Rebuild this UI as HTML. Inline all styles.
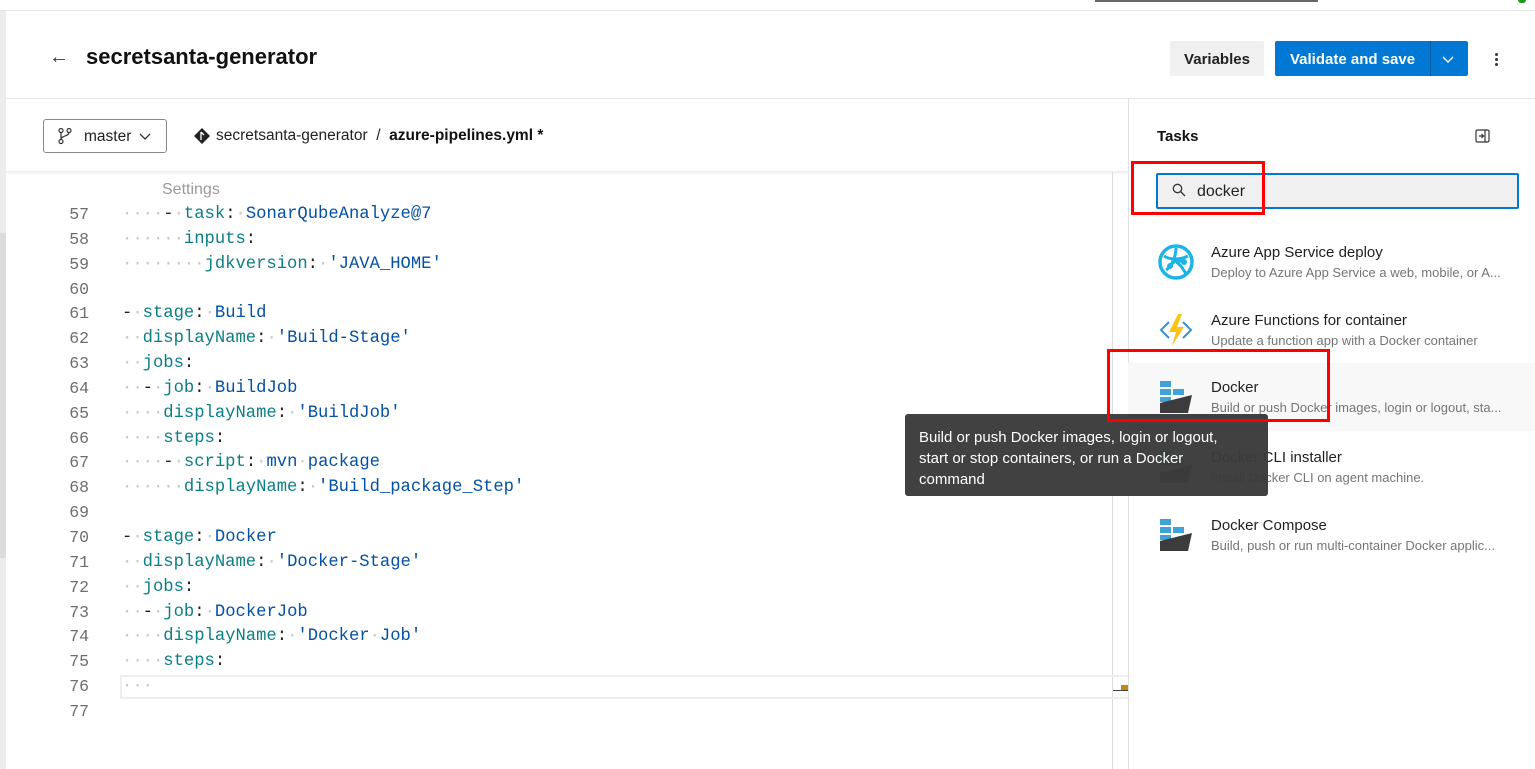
<!DOCTYPE html>
<html><head><meta charset="utf-8"><style>
*{box-sizing:border-box;margin:0;padding:0}
body{width:1535px;height:769px;overflow:hidden;background:#fff;font-family:"Segoe UI","Liberation Sans",sans-serif;position:relative;color:#201f1e}
.abs{position:absolute}
.code{position:absolute;left:0;font-family:"Liberation Mono",monospace;font-size:17.2px;white-space:pre;line-height:24.85px}
.ln{position:absolute;width:89px;text-align:right;color:#6e6e6e;font-family:"Liberation Mono",monospace;font-size:16.5px;line-height:24.85px}
.k{color:#0b7f86}.v{color:#0451a5}.d{color:#c8c8c8}
.item{position:absolute;left:1128px;width:407px;height:68px}
.item .t{position:absolute;left:83px;top:12px;font-size:15px;color:#201f1e}
.item .s{position:absolute;left:83px;top:33px;font-size:13px;color:#757575;white-space:nowrap}
.item svg{position:absolute;left:30px;top:12px}
</style></head><body>
<div class="abs" style="left:1095px;top:0;width:223px;height:2px;background:#666"></div>
<div class="abs" style="left:1518px;top:0;width:8px;height:3px;background:#1a9c1a;border-radius:0 0 3px 3px"></div>
<div class="abs" style="left:0;top:10px;width:1535px;height:1px;background:#e6e6e6"></div>
<div class="abs" style="left:0;top:11px;width:6px;height:222px;background:#ececec"></div>
<div class="abs" style="left:0;top:233px;width:6px;height:325px;background:#dcdcdc"></div>
<div class="abs" style="left:0;top:558px;width:6px;height:211px;background:#ececec"></div>

<!-- header -->
<div class="abs" style="left:49px;top:46px;font-size:20px;color:#333">&#8592;</div>
<div class="abs" style="left:86px;top:44px;font-size:22px;font-weight:bold;color:#111">secretsanta-generator</div>
<div class="abs" style="left:1170px;top:41px;width:94px;height:35px;background:#f0f0f0;border-radius:2px;font-size:15px;font-weight:600;text-align:center;line-height:37px;color:#222">Variables</div>
<div class="abs" style="left:1275px;top:41px;width:193px;height:35px;background:#0078d4;border-radius:2px;color:#fff;font-size:15px;font-weight:600;line-height:37px">
<span style="position:absolute;left:15px">Validate and save</span>
<div style="position:absolute;left:155px;top:0;width:1px;height:35px;background:#005a9e"></div>
<svg style="position:absolute;left:166px;top:13px" width="14" height="10" viewBox="0 0 14 10"><path d="M2 3l5 5 5-5" fill="none" stroke="#fff" stroke-width="1.5"/></svg>
</div>
<div class="abs" style="left:1495px;top:53px;width:3px;height:3px;background:#333;border-radius:50%;box-shadow:0 5px 0 #333,0 10px 0 #333"></div>
<div class="abs" style="left:6px;top:98px;width:1529px;height:1px;background:#e6e6e6"></div>

<!-- branch row -->
<div class="abs" style="left:43px;top:119px;width:124px;height:34px;border:1px solid #8a8a8a;border-radius:3px"></div>
<svg class="abs" style="left:57px;top:127px" width="16" height="18" viewBox="0 0 16 18"><circle cx="4" cy="3.5" r="2" fill="none" stroke="#333" stroke-width="1.2"/><circle cx="4" cy="14.5" r="2" fill="none" stroke="#333" stroke-width="1.2"/><circle cx="12" cy="3.5" r="2" fill="none" stroke="#333" stroke-width="1.2"/><path d="M4 5.5v7M12 5.5c0 4-8 3-8 7" fill="none" stroke="#333" stroke-width="1.2"/></svg>
<div class="abs" style="left:84px;top:128px;font-size:15.5px;color:#222">master</div>
<svg class="abs" style="left:138px;top:131px" width="14" height="10" viewBox="0 0 14 10"><path d="M2 3l5 5 5-5" fill="none" stroke="#333" stroke-width="1.3"/></svg>
<svg class="abs" style="left:193px;top:127px" width="18" height="18" viewBox="0 0 18 18"><path d="M9 1l8 8-8 8-8-8z" fill="#222"/><path d="M8 5v8M8 5l3 3" stroke="#fff" stroke-width="1.3" fill="none"/></svg>
<div class="abs" style="left:216px;top:127px;font-size:15.5px;color:#222">secretsanta-generator&nbsp;&nbsp;/&nbsp;&nbsp;<b style="font-weight:600;color:#111">azure-pipelines.yml *</b></div>
<div class="abs" style="left:6px;top:171px;width:1122px;height:4px;background:linear-gradient(#ececec,#fff)"></div>

<!-- editor -->
<div class="abs" style="left:1112px;top:172px;width:1px;height:597px;background:#dcdcdc"></div>
<div class="abs" style="left:120px;top:675px;width:1008px;height:24px;border:2px solid #eeeeee;border-right:none"></div>
<div class="abs" style="left:1121px;top:685px;width:7px;height:6px;background:#c4860c"></div>
<div class="abs" style="left:1113px;top:690px;width:15px;height:1px;background:#444"></div>
<div class="abs" style="left:162px;top:181px;font-size:16px;color:#9a9a9a">Settings</div>

<div class="ln" style="top:203px">57<br>58<br>59<br>60<br>61<br>62<br>63<br>64<br>65<br>66<br>67<br>68<br>69<br>70<br>71<br>72<br>73<br>74<br>75<br>76<br>77</div>
<div class="code" style="left:122px;top:203px"><span class="d">····</span>-<span class="d">·</span><span class="k">task</span>:<span class="d">·</span><span class="v">SonarQubeAnalyze@7</span>
<span class="d">······</span><span class="k">inputs</span>:
<span class="d">········</span><span class="k">jdkversion</span>:<span class="d">·</span><span class="v">'JAVA_HOME'</span>

-<span class="d">·</span><span class="k">stage</span>:<span class="d">·</span><span class="v">Build</span>
<span class="d">··</span><span class="k">displayName</span>:<span class="d">·</span><span class="v">'Build-Stage'</span>
<span class="d">··</span><span class="k">jobs</span>:
<span class="d">··</span>-<span class="d">·</span><span class="k">job</span>:<span class="d">·</span><span class="v">BuildJob</span>
<span class="d">····</span><span class="k">displayName</span>:<span class="d">·</span><span class="v">'BuildJob'</span>
<span class="d">····</span><span class="k">steps</span>:
<span class="d">····</span>-<span class="d">·</span><span class="k">script</span>:<span class="d">·</span><span class="v">mvn<span class="d">·</span>package</span>
<span class="d">······</span><span class="k">displayName</span>:<span class="d">·</span><span class="v">'Build_package_Step'</span>

-<span class="d">·</span><span class="k">stage</span>:<span class="d">·</span><span class="v">Docker</span>
<span class="d">··</span><span class="k">displayName</span>:<span class="d">·</span><span class="v">'Docker-Stage'</span>
<span class="d">··</span><span class="k">jobs</span>:
<span class="d">··</span>-<span class="d">·</span><span class="k">job</span>:<span class="d">·</span><span class="v">DockerJob</span>
<span class="d">····</span><span class="k">displayName</span>:<span class="d">·</span><span class="v">'Docker<span class="d">·</span>Job'</span>
<span class="d">····</span><span class="k">steps</span>:
<span class="d">···</span>
</div>

<!-- right panel -->
<div class="abs" style="left:1128px;top:99px;width:1px;height:670px;background:#e0e0e0"></div>
<div class="abs" style="left:1157px;top:128px;font-size:15px;font-weight:600;color:#111">Tasks</div>
<svg class="abs" style="left:1475px;top:129px" width="15" height="14" viewBox="0 0 15 14"><rect x="1" y="1" width="13" height="12" rx="1.5" fill="none" stroke="#333" stroke-width="1.2"/><path d="M10 1v12" stroke="#333" stroke-width="1.2"/><path d="M4 7h4M6.5 5l2 2-2 2" stroke="#333" stroke-width="1.2" fill="none"/></svg>
<div class="abs" style="left:1156px;top:173px;width:363px;height:36px;background:#f0f0f0;border:2px solid #0078d4;border-radius:2px"></div>
<svg class="abs" style="left:1172px;top:183px" width="14" height="14" viewBox="0 0 14 14"><circle cx="5.5" cy="5.5" r="4.2" fill="none" stroke="#333" stroke-width="1.3"/><path d="M8.5 8.5l4.5 4.5" stroke="#333" stroke-width="1.3"/></svg>
<div class="abs" style="left:1197px;top:183px;font-size:16px;color:#222">docker</div>

<div class="item" style="top:232px"><svg width="36" height="36" viewBox="0 0 36 36"><circle cx="18" cy="18" r="16" fill="none" stroke="#1ab4e8" stroke-width="3.5"/><path d="M6 12c6 4 16 4 24 0M8 26c6-4 10-14 10-22M18 18c4 2 8 8 10 12M12 22l6-6 8 2" fill="none" stroke="#1ab4e8" stroke-width="3"/><circle cx="12" cy="22" r="3" fill="#1ab4e8"/><circle cx="26" cy="18" r="3" fill="#1ab4e8"/></svg><div class="t">Azure App Service deploy</div><div class="s">Deploy to Azure App Service a web, mobile, or A...</div></div>
<div class="item" style="top:300px"><svg width="36" height="36" viewBox="0 0 36 36"><path d="M11 10l-8 8 8 8M25 10l8 8-8 8" fill="none" stroke="#3a8fd0" stroke-width="2"/><path d="M20 2l-9 18h7l-4 14 12-19h-7l5-13z" fill="#fcc419"/></svg><div class="t">Azure Functions for container</div><div class="s">Update a function app with a Docker container</div></div>
<div class="item" style="top:363px;background:#f8f8f8"><svg width="36" height="36" viewBox="0 0 36 36" style="top:16px"><rect x="2" y="2" width="11" height="6" fill="#3fa3d8"/><rect x="2" y="10" width="11" height="6" fill="#3fa3d8"/><rect x="15" y="10" width="11" height="6" fill="#3fa3d8"/><rect x="2" y="18" width="11" height="5" fill="#3fa3d8"/><path d="M2 24l32-8-4 18H2z" fill="#3c3c3c"/></svg><div class="t" style="top:16px">Docker</div><div class="s" style="top:37px">Build or push Docker images, login or logout, sta...</div></div>
<div class="item" style="top:437px"><svg width="36" height="36" viewBox="0 0 36 36" style="top:12px"><rect x="2" y="2" width="11" height="6" fill="#3fa3d8"/><rect x="2" y="10" width="11" height="6" fill="#3fa3d8"/><rect x="15" y="10" width="11" height="6" fill="#3fa3d8"/><path d="M2 24l32-8-4 18H2z" fill="#3c3c3c"/></svg><div class="t">Docker CLI installer</div><div class="s">Install Docker CLI on agent machine.</div></div>
<div class="item" style="top:505px"><svg width="36" height="36" viewBox="0 0 36 36" style="top:12px"><rect x="2" y="2" width="11" height="6" fill="#3fa3d8"/><rect x="2" y="10" width="11" height="6" fill="#3fa3d8"/><rect x="15" y="10" width="11" height="6" fill="#3fa3d8"/><rect x="2" y="18" width="11" height="5" fill="#3fa3d8"/><path d="M2 24l32-8-4 18H2z" fill="#3c3c3c"/></svg><div class="t">Docker Compose</div><div class="s">Build, push or run multi-container Docker applic...</div></div>

<!-- tooltip -->
<div class="abs" style="left:905px;top:414px;width:363px;height:82px;background:#3b3b3b;border-radius:3px;color:#fff;font-size:15px;line-height:21px;padding:13px 0 0 14px;opacity:.97">Build or push Docker images, login or logout,<br>start or stop containers, or run a Docker<br>command</div>

<!-- red boxes -->
<div class="abs" style="left:1131px;top:161px;width:134px;height:54px;border:3px solid #f00"></div>
<div class="abs" style="left:1107px;top:349px;width:223px;height:73px;border:3px solid #f00"></div>
</body></html>
